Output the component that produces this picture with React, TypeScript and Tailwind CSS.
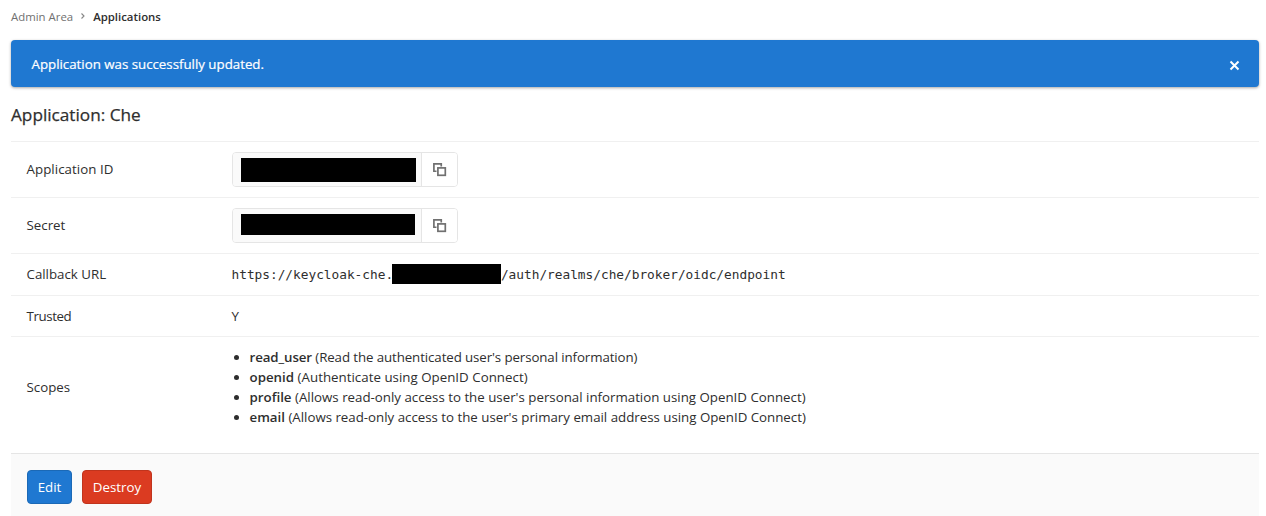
import type { ReactNode } from 'react';

function CopyIcon() {
  return (
    <svg className="mt-px ml-px" width="14" height="14" viewBox="0 0 14 14" fill="none">
      <path d="M3.5 8.25H0.9V0.9H8.25V3.5" stroke="#707070" strokeWidth="1.7" />
      <rect x="4.9" y="4.9" width="7.4" height="7.4" stroke="#707070" strokeWidth="1.7" />
    </svg>
  );
}

type RowProps = { label: string; height: string; labelClass?: string; children: ReactNode };

function Row({ label, height, labelClass = '', children }: RowProps) {
  return (
    <div className={`flex items-center border-t border-[#f0f0f0] pl-[15.5px] ${height}`}>
      <div className={`w-[205px] shrink-0 ${labelClass}`}>{label}</div>
      <div className="min-w-0">{children}</div>
    </div>
  );
}

function SecretField({ bar }: { bar: string }) {
  return (
    <div className="ml-[0.5px] flex h-[35px] w-[226px] overflow-hidden rounded-[4px] border border-[#e5e5e5]">
      <div className="flex w-[189px] items-start border-r border-[#e5e5e5] bg-[#fafafa] pt-[5px] pl-2">
        <div className={`bg-black ${bar}`} />
      </div>
      <button className="flex flex-1 items-center justify-center bg-white" aria-label="Copy">
        <CopyIcon />
      </button>
    </div>
  );
}

const scopes = [
  { name: 'read_user', description: "(Read the authenticated user's personal information)", tracking: 'tracking-[-0.1px]' },
  { name: 'openid', description: '(Authenticate using OpenID Connect)', tracking: 'tracking-[0.02px]' },
  { name: 'profile', description: "(Allows read-only access to the user's personal information using OpenID Connect)", tracking: 'tracking-normal' },
  { name: 'email', description: "(Allows read-only access to the user's primary email address using OpenID Connect)", tracking: 'tracking-[-0.01px]' },
];

export default function App() {
  return (
    <div className="h-[516px] overflow-hidden bg-white pr-[7px] pl-[11px] font-['Open_Sans',sans-serif] text-[13.3px] leading-5 text-[#2e2e2e]">
      <nav className="flex h-10 items-start pt-[7px] text-[11.4px]">
        <span className="text-[#707070]">Admin Area</span>
        <svg className="mx-[7px] mt-[5px]" width="6" height="8" viewBox="0 0 6 8" fill="none">
          <path d="M1.5 1.5L4 4L1.5 6.5" stroke="#868686" strokeWidth="1.1" />
        </svg>
        <span className="font-semibold">Applications</span>
      </nav>
      <div className="flex h-[47px] items-center justify-between rounded-[4px] bg-[#1f78d1] pr-[19px] pl-[20.5px] text-white shadow-[0_1px_3px_rgba(0,0,0,0.35)]">
        <span className="tracking-[-0.01px] [-webkit-text-stroke:0.2px_white]">Application was successfully updated.</span>
        <svg className="mt-1" width="11" height="11" viewBox="0 0 11 11">
          <path d="M1.5 1.5L9.5 9.5M9.5 1.5L1.5 9.5" stroke="white" strokeWidth="2" />
        </svg>
      </div>
      <h1 className="flex h-[54px] items-center pt-px text-[17.2px] [-webkit-text-stroke:0.25px_#2e2e2e]">Application: Che</h1>
      <Row label="Application ID" height="h-14" labelClass="pb-0.5 tracking-[0.06px]">
        <SecretField bar="h-6 w-[175px]" />
      </Row>
      <Row label="Secret" height="h-14" labelClass="pb-0.5">
        <SecretField bar="h-[21px] w-[174px]" />
      </Row>
      <Row label="Callback URL" height="h-[42px]" labelClass="pb-0.5">
        <div className="mb-px flex h-5 items-start font-['DejaVu_Sans_Mono',monospace] text-[12.8px] tracking-[-0.01px]">
          <span className="pt-px">https://keycloak-che.</span>
          <span className="-ml-[1.2px] h-5 w-[109px] bg-black" />
          <span className="pt-px">/auth/realms/che/broker/oidc/endpoint</span>
        </div>
      </Row>
      <Row label="Trusted" height="h-[41px]" labelClass="tracking-[-0.4px]">Y</Row>
      <Row label="Scopes" height="h-[117px]" labelClass="pb-4">
        <ul className="mb-4 list-disc pl-[18px]">
          {scopes.map((scope) => (
            <li key={scope.name} className={scope.tracking}>
              <strong className="font-semibold">{scope.name}</strong> <span>{scope.description}</span>
            </li>
          ))}
        </ul>
      </Row>
      <div className="flex h-[63px] items-start gap-[10px] border-t border-[#e5e5e5] bg-[#fafafa] px-4 pt-4 text-white">
        <button className="h-[34px] w-[45px] rounded-[4px] border border-[#1b69b6] bg-[#1f78d1]">Edit</button>
        <button className="h-[34px] w-[70px] rounded-[4px] border border-[#c0341d] bg-[#db3b21]">Destroy</button>
      </div>
    </div>
  );
}
